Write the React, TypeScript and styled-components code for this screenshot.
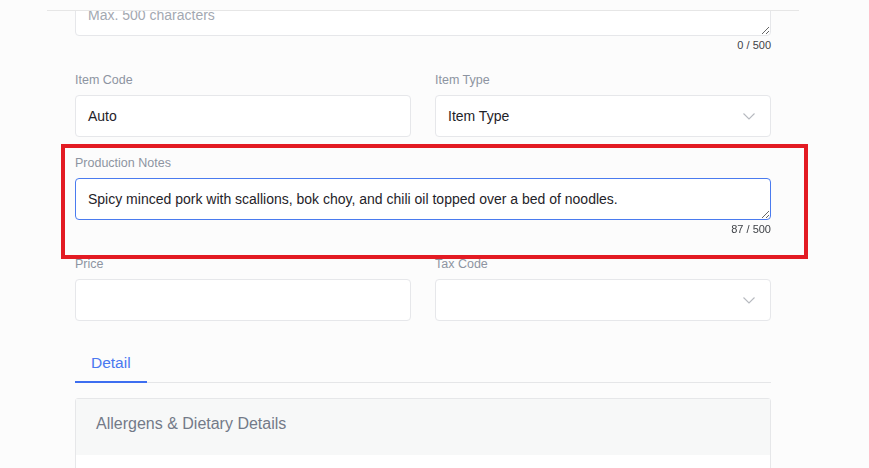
import React, { useEffect, useRef } from "react";
import styled, { createGlobalStyle } from "styled-components";

const GlobalStyle = createGlobalStyle`
  html, body { margin: 0; padding: 0; background: #fcfcfc; }
  body { font-family: "Liberation Sans", Arial, sans-serif; }
  * { box-sizing: border-box; }
`;

const Page = styled.div`
  width: 869px;
  height: 468px;
  overflow: hidden;
  background: #fcfcfc;
`;

const Panel = styled.div`
  margin-left: 47px;
  width: 752px;
  height: 100%;
  display: flex;
  flex-direction: column;
`;

const TopBar = styled.div`
  height: 11px;
  flex-shrink: 0;
  background: #fcfcfc;
  border-bottom: 1px solid #e6e6e6;
`;

const Body = styled.div`
  flex: 1;
  min-height: 0;
  clip-path: inset(0 -200px 0 -200px);
  padding: 0 28px;
`;

const Scrolled = styled.div`
  margin-top: -17px;
`;

const Row = styled.div<{ $cols?: number; $mb?: number; $mt?: number }>`
  display: grid;
  grid-template-columns: repeat(${(p) => p.$cols ?? 1}, 1fr);
  column-gap: 24px;
  margin-top: ${(p) => p.$mt ?? 0}px;
  margin-bottom: ${(p) => p.$mb ?? 17}px;
`;

const Field = styled.div`
  display: flex;
  flex-direction: column;
  min-width: 0;
`;

const Label = styled.label`
  font-size: 12.5px;
  line-height: 16px;
  color: #8d94a1;
  margin-bottom: 7px;
`;

const Input = styled.div`
  height: 42px;
  background: #fff;
  border: 1px solid #e6e7ea;
  border-radius: 4px;
  padding: 0 12px;
  display: flex;
  align-items: center;
  font-size: 14px;
  color: #1f2329;
`;

const SelectBox = styled(Input)`
  justify-content: space-between;
  padding-right: 15px;
`;

const TextArea = styled.textarea<{ $focused?: boolean }>`
  display: block;
  width: 100%;
  height: 42px;
  min-height: 42px;
  background: #fff;
  border: 1px solid ${(p) => (p.$focused ? "#4a7bef" : "#e6e7ea")};
  border-radius: 4px;
  padding: 10px 12px;
  font-family: "Liberation Sans", Arial, sans-serif;
  font-size: 14px;
  line-height: 20px;
  color: #1f2329;
  resize: vertical;
  outline: none;
  caret-color: #1f2329;
  &::placeholder { color: #a3a8b1; }
`;

const Counter = styled.div`
  margin: 2px 0 3px;
  text-align: right;
  font-size: 11px;
  line-height: 14px;
  color: #3f4247;
`;

const Highlight = styled.div`
  position: relative;
  margin-bottom: 17px;
`;

const Marker = styled.div`
  position: absolute;
  top: -11px;
  left: -14px;
  right: -37px;
  bottom: -20px;
  border: 4px solid #e31b23;
  pointer-events: none;
  z-index: 3;
`;

const TabList = styled.div`
  display: flex;
  border-bottom: 1px solid #e5e6e8;
  margin-top: 20px;
`;

const Tab = styled.div<{ $active?: boolean }>`
  padding: 12px 16px 8px;
  font-size: 15.5px;
  line-height: 20px;
  color: ${(p) => (p.$active ? "#4a78f0" : "#666")};
  border-bottom: 2px solid ${(p) => (p.$active ? "#3d6ef0" : "transparent")};
  margin-bottom: -1px;
`;

const Card = styled.div`
  margin-top: 15px;
  border: 1px solid #e6e7e9;
  border-radius: 3px;
  background: #fff;
  height: 120px;
`;

const CardHeader = styled.div`
  background: #f7f8f8;
  padding: 13px 20px 19px;
  font-size: 16px;
  line-height: 24px;
  color: #737a88;
`;

const Chevron = () => (
  <svg width="12" height="7" viewBox="0 0 12 7" fill="none">
    <polyline points="0.5,0.5 6,6 11.5,0.5" stroke="#b6b9bf" strokeWidth="1.1" />
  </svg>
);

const notes =
  "Spicy minced pork with scallions, bok choy, and chili oil topped over a bed of noodles.";

export default function App() {
  const ref = useRef<HTMLTextAreaElement>(null);
  useEffect(() => {
    const el = ref.current;
    if (el) {
      el.focus({ preventScroll: true });
      el.setSelectionRange(notes.length, notes.length);
    }
  }, []);

  return (
    <>
      <GlobalStyle />
      <Page>
        <Panel>
          <TopBar />
          <Body>
            <Scrolled>
              <Field>
                <TextArea placeholder="Max. 500 characters" readOnly />
                <Counter>0 / 500</Counter>
              </Field>
              <Row $cols={2} $mt={17} $mb={18}>
                <Field>
                  <Label>Item Code</Label>
                  <Input>Auto</Input>
                </Field>
                <Field>
                  <Label>Item Type</Label>
                  <SelectBox>
                    Item Type
                    <Chevron />
                  </SelectBox>
                </Field>
              </Row>
              <Highlight>
                <Row $mb={0}>
                  <Field>
                    <Label>Production Notes</Label>
                    <TextArea ref={ref} $focused defaultValue={notes} />
                    <Counter>87 / 500</Counter>
                  </Field>
                </Row>
                <Marker />
              </Highlight>
              <Row $cols={2} $mb={0}>
                <Field>
                  <Label>Price</Label>
                  <Input />
                </Field>
                <Field>
                  <Label>Tax Code</Label>
                  <SelectBox>
                    <span />
                    <Chevron />
                  </SelectBox>
                </Field>
              </Row>
              <TabList>
                <Tab $active>Detail</Tab>
              </TabList>
              <Card>
                <CardHeader>Allergens &amp; Dietary Details</CardHeader>
              </Card>
            </Scrolled>
          </Body>
        </Panel>
      </Page>
    </>
  );
}
